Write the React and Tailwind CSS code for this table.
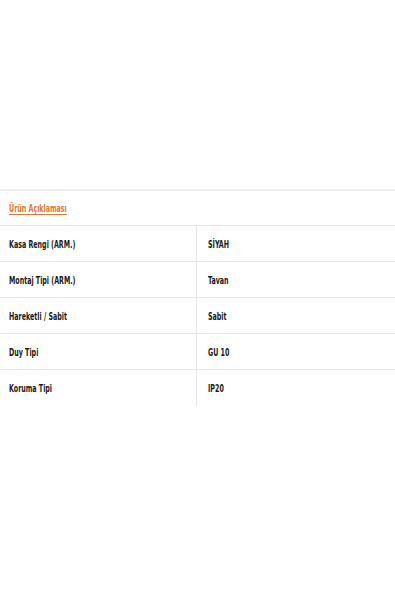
const rows = [
  ['Kasa Rengi (ARM.)', 'SİYAH'],
  ['Montaj Tipi (ARM.)', 'Tavan'],
  ['Hareketli / Sabit', 'Sabit'],
  ['Duy Tipi', 'GU 10'],
  ['Koruma Tipi', 'IP20'],
];

// condensed bold label, the reference uses a narrow display face
const Cond = ({ children, className = '' }) => (
  <span className={`inline-block origin-left scale-x-[0.64] whitespace-nowrap ${className}`}>{children}</span>
);

export default function App() {
  return (
    <div
      className="w-[395px] h-[592px] bg-white text-[#1a1a1a]"
      style={{ fontFamily: '"DejaVu Sans Condensed", "Liberation Sans", sans-serif' }}
    >
      <div className="h-[189px]" />
      <section className="border-t-2 border-[#ededed]">
        {/* Tab heading */}
        <div className="h-[35px] flex items-center pt-[2px] px-[9px] border-b border-[#e6e6e6]">
          <Cond className="text-[11px] font-bold text-[#e8762d] underline underline-offset-2">
            Ürün Açıklaması
          </Cond>
        </div>

        {/* Spec table */}
        <div>
          {rows.map(([label, value], i) => (
            <div
              key={label}
              className={`grid grid-cols-[197px_1fr] h-[36px] ${i < rows.length - 1 ? 'border-b border-[#e6e6e6]' : ''}`}
            >
              <div className="flex items-center pt-[3px] px-[9px] border-r border-[#e6e6e6] text-[11px] font-bold">
                <Cond>{label}</Cond>
              </div>
              <div className="flex items-center pt-[3px] px-[11px] text-[11px] font-bold">
                <Cond>{value}</Cond>
              </div>
            </div>
          ))}
        </div>
      </section>
    </div>
  );
}
